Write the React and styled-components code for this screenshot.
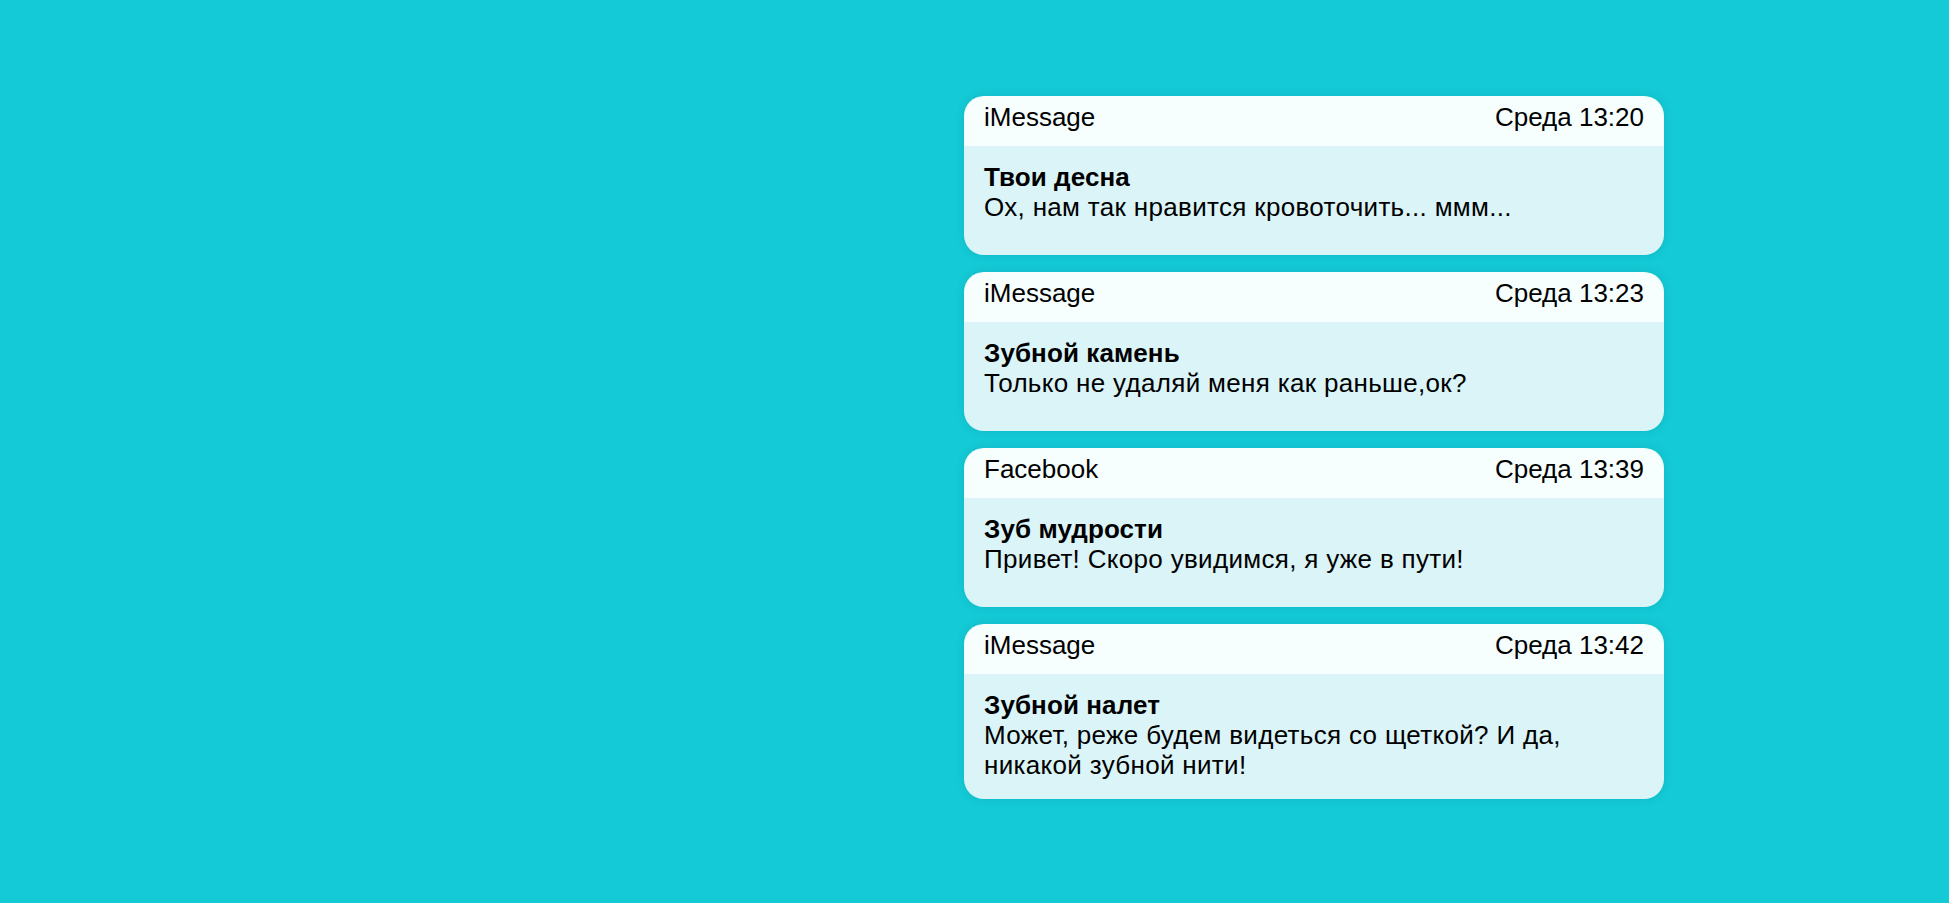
import styled, { createGlobalStyle } from "styled-components";

const notifications = [
  {
    app: "iMessage",
    time: "Среда 13:20",
    title: "Твои десна",
    text: "Ох, нам так нравится кровоточить... ммм...",
  },
  {
    app: "iMessage",
    time: "Среда 13:23",
    title: "Зубной камень",
    text: "Только не удаляй меня как раньше,ок?",
  },
  {
    app: "Facebook",
    time: "Среда 13:39",
    title: "Зуб мудрости",
    text: "Привет! Скоро увидимся, я уже в пути!",
  },
  {
    app: "iMessage",
    time: "Среда 13:42",
    title: "Зубной налет",
    text: "Может, реже будем видеться со щеткой? И да, никакой зубной нити!",
  },
];

const GlobalStyle = createGlobalStyle`
  html, body {
    margin: 0;
    padding: 0;
    background: #14cad6;
    font-family: "Liberation Sans", Arial, sans-serif;
  }
  * {
    box-sizing: border-box;
  }
`;

const Page = styled.div`
  min-height: 903px;
  display: grid;
  grid-template-columns: 964px 700px;
  padding-top: 96px;
`;

const List = styled.div`
  grid-column: 2;
  display: flex;
  flex-direction: column;
  gap: 17px;
`;

const Card = styled.div`
  border-radius: 20px;
  overflow: hidden;
  box-shadow: 0 0 10px rgba(0, 60, 70, 0.12);
`;

const Header = styled.div`
  display: flex;
  justify-content: space-between;
  align-items: center;
  height: 50px;
  padding: 0 20px 8px;
  background: #f6fefe;
  color: #000;
  font-size: 26px;
  line-height: 30px;
`;

const Body = styled.div`
  min-height: 109px;
  padding: 16px 20px 19px;
  background: #daf4f7;
  color: #000;
  font-size: 26px;
  line-height: 30px;
`;

const Title = styled.div`
  font-weight: bold;
  letter-spacing: 0.1px;
`;

const Text = styled.div`
  letter-spacing: 0.32px;
  padding-right: 60px;
`;

export default function App() {
  return (
    <>
      <GlobalStyle />
      <Page>
        <List>
          {notifications.map((n, i) => (
            <Card key={i}>
              <Header>
                <span>{n.app}</span>
                <span>{n.time}</span>
              </Header>
              <Body>
                <Title>{n.title}</Title>
                <Text>{n.text}</Text>
              </Body>
            </Card>
          ))}
        </List>
      </Page>
    </>
  );
}
